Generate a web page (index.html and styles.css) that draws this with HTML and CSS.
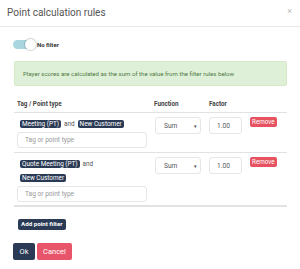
FILE: index.html
```html
<!DOCTYPE html>
<html>
<head>
<meta charset="utf-8">
<link rel="stylesheet" href="styles.css">
</head>
<body>
<div class="modal">
  <div class="modal-header">
    <h4 class="modal-title">Point calculation rules</h4>
    <span class="close">×</span>
  </div>
  <div class="modal-body">
    <div class="toggle-row">
      <span class="toggle"><span class="knob"></span></span>
      <span class="toggle-label">No filter</span>
    </div>
    <div class="alert">Player scores are calculated as the sum of the value from the filter rules below</div>
    <div class="rules">
      <div class="rule head">
        <div class="cell">Tag / Point type</div>
        <div class="cell">Function</div>
        <div class="cell">Factor</div>
        <div class="cell"></div>
      </div>
      <div class="rule">
        <div class="cell tags">
          <div class="tagline"><span class="badge">Meeting (PT)</span> <span class="and">and</span> <span class="badge">New Customer</span></div>
          <div class="input placeholder">Tag or point type</div>
        </div>
        <div class="cell"><div class="select">Sum<span class="caret">▾</span></div></div>
        <div class="cell"><div class="input factor">1.00</div></div>
        <div class="cell"><div class="btn-remove">Remove</div></div>
      </div>
      <div class="rule last">
        <div class="cell tags">
          <div class="tagline"><span class="badge">Quote Meeting (PT)</span> <span class="and">and</span></div>
          <div class="tagline"><span class="badge">New Customer</span></div>
          <div class="input placeholder">Tag or point type</div>
        </div>
        <div class="cell"><div class="select">Sum<span class="caret">▾</span></div></div>
        <div class="cell"><div class="input factor">1.00</div></div>
        <div class="cell"><div class="btn-remove">Remove</div></div>
      </div>
    </div>
    <div class="add-row"><span class="btn-add">Add point filter</span></div>
    <div class="actions">
      <span class="btn btn-ok">Ok</span>
      <span class="btn btn-cancel">Cancel</span>
    </div>
  </div>
</div>
</body>
</html>
```
FILE: styles.css
```css
* { box-sizing: border-box; }
html, body { margin: 0; padding: 0; background: #fff; }
body { font-family: Roboto, "Liberation Sans", sans-serif; color: #333; }

.modal { width: 300px; }

.modal-header {
  height: 27px;
  border-bottom: 1px solid #e8e8e8;
  display: flex;
  align-items: center;
  justify-content: space-between;
  padding: 0 7px 1px 7px;
}
.modal-title {
  margin: 0;
  font-size: 10px;
  font-weight: 400;
  color: #555;
}
.close { font-size: 9px; color: #bbb; margin-right: 1px; margin-top: -4px; }

.modal-body { padding: 12px 13px 0 13px; }

.toggle-row { display: flex; align-items: center; height: 10px; }
.toggle {
  width: 22px; height: 9px; border-radius: 5px;
  background: #a9d6df; position: relative; display: inline-block;
}
.knob {
  position: absolute; right: -1px; top: -1px;
  width: 11px; height: 11px; border-radius: 50%;
  background: #fff; box-shadow: 0 0 1px 1px rgba(0,0,0,0.18);
}
.toggle-label { font-size: 6px; font-weight: 700; margin-left: 2px; color: #333; }

.alert {
  margin: 12px 0 10px 1px;
  height: 25px;
  padding: 0 8px;
  display: flex; align-items: center;
  background: #dff0d8;
  border: 1px solid #d6e9c6;
  border-radius: 2px;
  color: #4f7a45;
  font-size: 6.1px;
}

.rules { margin-left: 1px; }
.rule {
  display: grid;
  grid-template-columns: 137px 55px 41px 1fr;
  border-bottom: 1px solid #e2e2e2;
  padding: 4px 0 4px 0;
}
.rule.head { padding: 4px 0 3px 0; font-size: 6.3px; font-weight: 700; color: #444; line-height: 9px; }
.rule.last { border-bottom: 2px solid #e2e2e2; padding-bottom: 3px; }
.cell { padding: 0 3px; }

.tagline { height: 14px; display: flex; align-items: center; gap: 3px; padding-left: 3px; }
.badge {
  background: #2b3a55; color: #fff;
  font-size: 6.4px; line-height: 8px; height: 8px;
  padding: 0 2px; border-radius: 2px;
  display: inline-block;
}
.and { font-size: 6.4px; color: #555; }

.input {
  border: 1px solid #e6e6e6; border-radius: 3px;
  height: 16px; margin-top: 1px;
  font-size: 6.6px; color: #999;
  display: flex; align-items: center; padding-left: 7px;
  width: 130px;
}
.input.factor { width: 33px; margin-top: 0; height: 17px; color: #555; padding-left: 7px; }

.select {
  border: 1px solid #e6e6e6; border-radius: 3px;
  height: 17px; width: 46px; margin-left: 1px;
  font-size: 6.6px; color: #555;
  display: flex; align-items: center; justify-content: space-between;
  padding: 0 3px 0 8px;
}
.caret { font-size: 5px; color: #444; }

.btn-remove {
  width: fit-content;
  background: #e6525f; color: #fff;
  font-size: 6.3px; line-height: 10px; height: 10px;
  padding: 0 2px; border-radius: 2px;
}

.add-row { padding: 4px 0 0 5px; }
.btn-add {
  display: inline-block;
  background: #2b3a55; color: #fff;
  font-size: 6.2px; font-weight: 700;
  height: 11px; line-height: 11px;
  padding: 0 3px; border-radius: 2px;
}

.actions { display: flex; gap: 2px; margin-top: 13px; margin-left: 0; }
.btn {
  height: 17px; display: inline-flex; align-items: center; justify-content: center;
  color: #fff; font-size: 7.5px; border-radius: 2px;
}
.btn-ok { background: #2b3a55; width: 22px; }
.btn-cancel { background: #e8556a; width: 35px; }
```
